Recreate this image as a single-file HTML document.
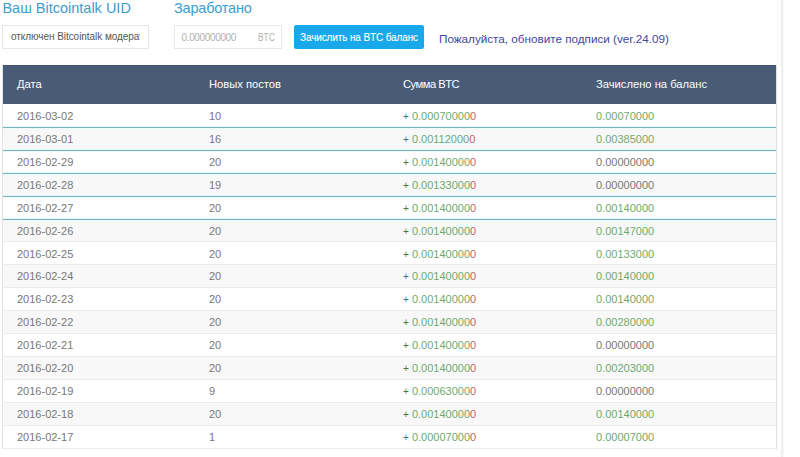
<!DOCTYPE html>
<html><head><meta charset="utf-8"><style>
html,body{margin:0;padding:0;background:#fff;width:800px;height:457px;overflow:hidden;position:relative;font-family:"Liberation Sans",sans-serif;}
.vline{position:absolute;left:781px;top:0;width:3px;height:457px;background:linear-gradient(to right,#ebebeb,#f1f1f1 50%,#fbfbfb);}
.vline2{position:absolute;left:777px;top:0;width:1px;height:457px;background:#fafafa;}
.t1,.t2{position:absolute;top:0px;font-size:14.5px;line-height:16px;color:#3f9ccc;white-space:nowrap;}
.t1{left:2.4px;}
.t2{left:174px;letter-spacing:-0.2px;}
.in1,.in2{position:absolute;top:25px;height:22px;border:1px solid #e6e6e6;background:#fff;overflow:hidden;white-space:nowrap;}
.in1{left:2px;width:145px;}
.in1 span{position:absolute;left:8px;top:0px;line-height:22px;font-size:10px;color:#555;width:129px;overflow:hidden;letter-spacing:-0.05px;}
.in2{left:174px;width:106px;}
.in2 .v{position:absolute;left:6.5px;top:1px;line-height:22px;font-size:10px;letter-spacing:-0.35px;color:#b0b0b0;}
.in2 .b{position:absolute;left:82.5px;top:1px;line-height:22px;font-size:10px;transform:scaleX(0.84);transform-origin:0 50%;color:#b0b0b0;}
.btn{position:absolute;left:294px;top:25px;width:130px;height:24px;background:#19a9ea;border-radius:2px;color:#fff;font-size:10px;line-height:26px;letter-spacing:-0.13px;text-align:center;-webkit-text-stroke:0.1px #fff;white-space:nowrap;}
.lnk{position:absolute;left:439px;top:32px;font-size:11.7px;line-height:14px;color:#42469c;white-space:nowrap;}
.tbl{position:absolute;left:2px;top:65px;width:773px;height:384px;border-left:1px solid #e3e3e3;border-right:1px solid #e3e3e3;}
.hd{position:absolute;left:0;top:0;width:773px;height:39px;background:#495b76;color:#fff;box-shadow:inset 0 1px 0 #46566a;}
.hd span,.row span.c1,.row span.c2,.row span.c3,.row span.c4{position:absolute;font-size:11px;white-space:nowrap;}
.hd span{top:0;line-height:38px;font-size:11.2px;}
.hd .c1{left:14px;} .hd .c2{left:206px;} .hd .c3{left:400px;} .hd .c4{left:593px;}
.row .c1{left:14px;} .row .c2{left:206px;} .row .c3{left:400px;} .row .c4{left:593px;}
.row{position:absolute;left:0;width:773px;height:23px;background:#fff;color:#777;}
.row span.c1,.row span.c2,.row span.c3,.row span.c4{top:0;line-height:23px;}
.tx{position:absolute;left:0;width:773px;height:23px;}
.row.alt{background:#f8f8f8;}
.ln{position:absolute;left:0;width:773px;height:1px;}
.gl{background:#ececec;}
.tl{background:#7cb4c2;}
.halo2{background:#edfafb;}
.halo{background:#dff8fa;}
.pl{color:#3f7c3f;font-size:10px;}
.gr{color:#70a970;}
.rd{color:#c95f5f;}
.gr2{color:#70a970;}
.gy{color:#777;}

</style></head><body>
<div class="vline"></div><div class="vline2"></div>
<div class="t1">Ваш Bitcointalk UID</div>
<div class="t2">Заработано</div>
<div class="in1"><span>отключен Bitcointalk модератором</span></div>
<div class="in2"><span class="v">0.000000000</span><span class="b">BTC</span></div>
<div class="btn">Зачислить на BTC баланс</div>
<div class="lnk">Пожалуйста, обновите подписи (ver.24.09)</div>
<div class="tbl">
<div class="hd"><span class="c1">Дата</span><span class="c2">Новых постов</span><span class="c3" style="letter-spacing:-0.5px">Сумма BTC</span><span class="c4">Зачислено на баланс</span></div>
<div class="row teal" style="top:39px"><div class="tx" style="top:1.00px"><span class="c1">2016-03-02</span><span class="c2">10</span><span class="c3"><span class="pl">+</span> <span class="gr">0.00070000</span><span class="rd">0</span></span><span class="c4 gr2">0.00070000</span></div></div>
<div class="row alt teal" style="top:62px"><div class="tx" style="top:0.93px"><span class="c1">2016-03-01</span><span class="c2">16</span><span class="c3"><span class="pl">+</span> <span class="gr">0.00112000</span><span class="rd">0</span></span><span class="c4 gr2">0.00385000</span></div></div>
<div class="row teal" style="top:85px"><div class="tx" style="top:0.85px"><span class="c1">2016-02-29</span><span class="c2">20</span><span class="c3"><span class="pl">+</span> <span class="gr">0.00140000</span><span class="rd">0</span></span><span class="c4 gy">0.00000000</span></div></div>
<div class="row alt teal" style="top:108px"><div class="tx" style="top:0.78px"><span class="c1">2016-02-28</span><span class="c2">19</span><span class="c3"><span class="pl">+</span> <span class="gr">0.00133000</span><span class="rd">0</span></span><span class="c4 gy">0.00000000</span></div></div>
<div class="row teal" style="top:131px"><div class="tx" style="top:0.70px"><span class="c1">2016-02-27</span><span class="c2">20</span><span class="c3"><span class="pl">+</span> <span class="gr">0.00140000</span><span class="rd">0</span></span><span class="c4 gr2">0.00140000</span></div></div>
<div class="row alt" style="top:154px"><div class="tx" style="top:0.62px"><span class="c1">2016-02-26</span><span class="c2">20</span><span class="c3"><span class="pl">+</span> <span class="gr">0.00140000</span><span class="rd">0</span></span><span class="c4 gr2">0.00147000</span></div></div>
<div class="row" style="top:177px"><div class="tx" style="top:0.55px"><span class="c1">2016-02-25</span><span class="c2">20</span><span class="c3"><span class="pl">+</span> <span class="gr">0.00140000</span><span class="rd">0</span></span><span class="c4 gr2">0.00133000</span></div></div>
<div class="row alt" style="top:200px"><div class="tx" style="top:0.47px"><span class="c1">2016-02-24</span><span class="c2">20</span><span class="c3"><span class="pl">+</span> <span class="gr">0.00140000</span><span class="rd">0</span></span><span class="c4 gr2">0.00140000</span></div></div>
<div class="row" style="top:223px"><div class="tx" style="top:0.40px"><span class="c1">2016-02-23</span><span class="c2">20</span><span class="c3"><span class="pl">+</span> <span class="gr">0.00140000</span><span class="rd">0</span></span><span class="c4 gr2">0.00140000</span></div></div>
<div class="row alt" style="top:246px"><div class="tx" style="top:0.33px"><span class="c1">2016-02-22</span><span class="c2">20</span><span class="c3"><span class="pl">+</span> <span class="gr">0.00140000</span><span class="rd">0</span></span><span class="c4 gr2">0.00280000</span></div></div>
<div class="row" style="top:269px"><div class="tx" style="top:0.25px"><span class="c1">2016-02-21</span><span class="c2">20</span><span class="c3"><span class="pl">+</span> <span class="gr">0.00140000</span><span class="rd">0</span></span><span class="c4 gy">0.00000000</span></div></div>
<div class="row alt" style="top:292px"><div class="tx" style="top:0.18px"><span class="c1">2016-02-20</span><span class="c2">20</span><span class="c3"><span class="pl">+</span> <span class="gr">0.00140000</span><span class="rd">0</span></span><span class="c4 gr2">0.00203000</span></div></div>
<div class="row" style="top:315px"><div class="tx" style="top:0.10px"><span class="c1">2016-02-19</span><span class="c2">9</span><span class="c3"><span class="pl">+</span> <span class="gr">0.00063000</span><span class="rd">0</span></span><span class="c4 gy">0.00000000</span></div></div>
<div class="row alt" style="top:338px"><div class="tx" style="top:0.03px"><span class="c1">2016-02-18</span><span class="c2">20</span><span class="c3"><span class="pl">+</span> <span class="gr">0.00140000</span><span class="rd">0</span></span><span class="c4 gr2">0.00140000</span></div></div>
<div class="row" style="top:361px"><div class="tx" style="top:-0.05px"><span class="c1">2016-02-17</span><span class="c2">1</span><span class="c3"><span class="pl">+</span> <span class="gr">0.00007000</span><span class="rd">0</span></span><span class="c4 gr2">0.00007000</span></div></div>
<div class="ln halo" style="top:61px"></div><div class="ln tl" style="top:62px"></div><div class="ln halo2" style="top:63px"></div>
<div class="ln halo" style="top:84px"></div><div class="ln tl" style="top:85px"></div><div class="ln halo2" style="top:86px"></div>
<div class="ln halo" style="top:107px"></div><div class="ln tl" style="top:108px"></div><div class="ln halo2" style="top:109px"></div>
<div class="ln halo" style="top:130px"></div><div class="ln tl" style="top:131px"></div><div class="ln halo2" style="top:132px"></div>
<div class="ln halo" style="top:153px"></div><div class="ln tl" style="top:154px"></div><div class="ln halo2" style="top:155px"></div>
<div class="ln gl" style="top:176px"></div>
<div class="ln gl" style="top:199px"></div>
<div class="ln gl" style="top:222px"></div>
<div class="ln gl" style="top:245px"></div>
<div class="ln gl" style="top:268px"></div>
<div class="ln gl" style="top:291px"></div>
<div class="ln gl" style="top:314px"></div>
<div class="ln gl" style="top:337px"></div>
<div class="ln gl" style="top:360px"></div>
<div class="ln gl" style="top:383px"></div>
</div>
</body></html>
